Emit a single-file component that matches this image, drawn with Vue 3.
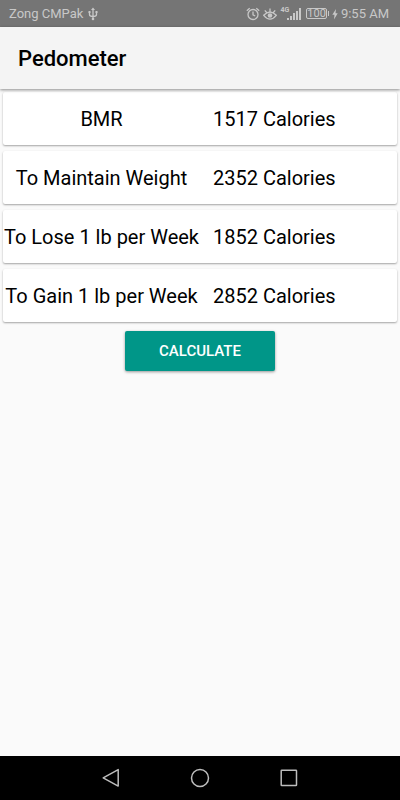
<script setup>
import { ref } from 'vue'

const maintenance = ref(2352)
const bmr = ref(1517)
const rows = ref([])

function calculate() {
  rows.value = [
    { label: 'BMR', calories: bmr.value },
    { label: 'To Maintain Weight', calories: maintenance.value },
    { label: 'To Lose 1 lb per Week', calories: maintenance.value - 500 },
    { label: 'To Gain 1 lb per Week', calories: maintenance.value + 500 },
  ]
}

calculate()
</script>

<template>
  <div class="screen">
    <div class="status">
      <div class="carrier">
        <span>Zong CMPak</span>
        <svg width="10" height="14" viewBox="0 0 10 14" fill="none" stroke="currentColor" stroke-width="1.3">
          <path d="M5 2v10M1.500 5v2.500Q1.500 9.500 5 9.500M8.500 5v2.500Q8.500 9.500 5 9.500" />
          <path d="M5 .5l2 2.500H3zM.5 4h2v2h-2zM7.500 4h2v2h-2z" fill="currentColor" stroke="none" />
          <circle cx="5" cy="12" r="1.300" fill="currentColor" stroke="none" />
        </svg>
      </div>
      <div class="indicators">
        <svg class="alarm" width="14" height="14" viewBox="0 0 14 14" fill="none" stroke="currentColor" stroke-width="1.300">
          <circle cx="7" cy="7.500" r="5" />
          <path d="M7 4.500v3.300l2.200 1.200M.8 3.700L3.700 1.200M13.200 3.700L10.300 1.200" />
        </svg>
        <svg class="eye" width="14" height="14" viewBox="0 0 14 14" fill="none" stroke="currentColor" stroke-width="1.300">
          <path d="M.7 8.300Q7 1.700 13.300 8.300Q7 16 .7 8.300zM7 4.500V1.500M3.600 5.500L1.800 3.300M10.400 5.500L12.200 3.300" />
          <circle cx="7" cy="8.500" r="2.300" fill="currentColor" stroke="none" />
        </svg>
        <span class="network">4G</span>
        <svg class="signal" width="14" height="14" viewBox="0 0 14 14" fill="currentColor">
          <path d="M0 11h2v2H0zM3 9h2v4H3zM6 6h2v7H6zM9 4h2v9H9zM12 1h2v12h-2z" />
        </svg>
        <span class="battery">100</span>
        <svg class="bolt" width="6" height="12" viewBox="0 0 6 12" fill="currentColor">
          <path d="M4 1L.3 6.800h2.200L2 11.500l3.700-6.300H3.500z" />
        </svg>
        <time>9:55 AM</time>
      </div>
    </div>

    <header class="appbar">
      <h1>Pedometer</h1>
    </header>

    <main>
      <dl class="results">
        <div v-for="row in rows" :key="row.label" class="card">
          <dt>{{ row.label }}</dt>
          <dd>{{ row.calories }} Calories</dd>
        </div>
      </dl>
      <button class="calculate" type="button" @click="calculate">CALCULATE</button>
    </main>

    <nav class="navbar">
      <button type="button" aria-label="Back">
        <svg width="20" height="20" viewBox="0 0 20 20" fill="none" stroke="currentColor" stroke-width="1.500" stroke-linejoin="round">
          <path d="M17.200 1.600v16.500L2.200 9.800z" />
        </svg>
      </button>
      <button type="button" aria-label="Home">
        <svg width="20" height="20" viewBox="0 0 20 20" fill="none" stroke="currentColor" stroke-width="1.500">
          <circle cx="10" cy="10" r="8.500" />
        </svg>
      </button>
      <button type="button" aria-label="Recent apps">
        <svg width="20" height="20" viewBox="0 0 20 20" fill="none" stroke="currentColor" stroke-width="1.500">
          <rect x="2.200" y="2.200" width="15.300" height="15.300" rx=".6" />
        </svg>
      </button>
    </nav>
  </div>
</template>

<style>
body {
  margin: 0;
}
</style>

<style scoped>
.screen {
  display: flex;
  flex-direction: column;
  min-height: 100vh;
  background: #fafafa;
  color: #000;
  font-family: Roboto, sans-serif;
}

.status {
  display: flex;
  align-items: center;
  justify-content: space-between;
  height: 27px;
  padding: 0 11px 0 9px;
  background: #757575;
  color: #c8c8c8;
  font-size: 13px;
  white-space: nowrap;
}

.carrier,
.indicators {
  display: flex;
  align-items: center;
}

.carrier {
  gap: 5px;
}

.eye {
  margin-left: 3px;
}

.network {
  align-self: flex-start;
  margin-left: 4px;
  font-size: 7px;
  font-weight: 700;
  line-height: 9px;
}

.signal {
  margin-left: -2px;
}

.battery {
  position: relative;
  margin: 0 5px;
  border: 1px solid currentColor;
  border-radius: 2px;
  font-size: 11px;
  line-height: 9px;
}

.battery::after {
  content: '';
  position: absolute;
  top: 2px;
  right: -3px;
  width: 1px;
  height: 5px;
  background: currentColor;
}

.bolt {
  margin-right: 3px;
}

.appbar {
  position: relative;
  display: flex;
  align-items: center;
  height: 60px;
  padding: 2px 18px 0;
  background: #f4f4f4;
  box-shadow: 0 1px 3px rgba(0, 0, 0, 0.45);
}

h1 {
  margin: 0;
  font-size: 22px;
  font-weight: 500;
  line-height: 28px;
}

main {
  display: flex;
  flex: 1;
  flex-direction: column;
  align-items: center;
  gap: 9px;
  padding-top: 3px;
}

.results {
  display: grid;
  gap: 6px;
  box-sizing: border-box;
  width: 100%;
  margin: 0;
  padding: 0 3px;
}

.card {
  display: grid;
  grid-template-columns: 1fr 1fr;
  align-items: center;
  height: 52px;
  padding-top: 1px;
  border-radius: 2px;
  background: #fff;
  box-shadow: 0 1px 2px rgba(0, 0, 0, 0.35);
  font-size: 20px;
  line-height: 24px;
  white-space: nowrap;
}

dt {
  text-align: center;
}

dd {
  margin: 0;
  padding-left: 13px;
}

.calculate {
  height: 40px;
  padding: 0 34px;
  border: 0;
  border-radius: 2px;
  background: #009688;
  box-shadow: 0 1px 3px rgba(0, 0, 0, 0.4);
  color: #fff;
  font: 500 15px/20px Roboto, sans-serif;
}

.navbar {
  display: flex;
  align-items: center;
  justify-content: center;
  gap: 69px;
  height: 44px;
  background: #000;
}

.navbar button {
  display: flex;
  padding: 0;
  border: 0;
  background: none;
  color: #bdbdbd;
}
</style>
